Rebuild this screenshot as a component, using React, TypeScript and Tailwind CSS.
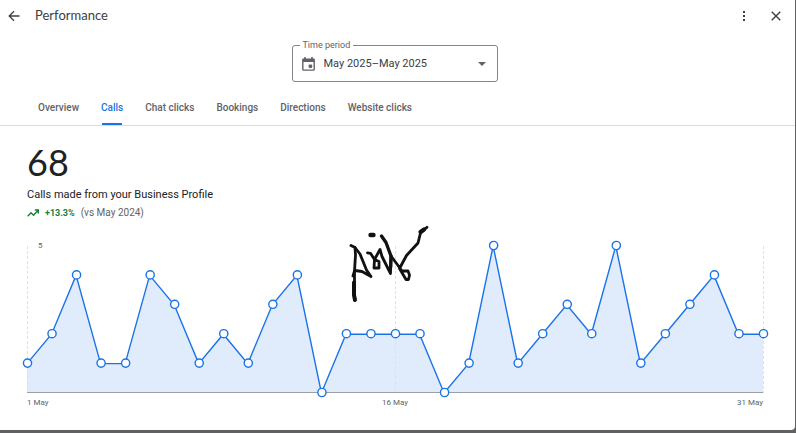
import React, { useState } from 'react';

const tabs = ['Overview', 'Calls', 'Chat clicks', 'Bookings', 'Directions', 'Website clicks'];

// Calls per day, 1 May to 31 May
const calls = [1, 2, 4, 1, 1, 4, 3, 1, 2, 1, 3, 4, 0, 2, 2, 2, 2, 0, 1, 5, 1, 2, 3, 2, 5, 1, 2, 3, 4, 2, 2];

const WIDTH = 736;
const HEIGHT = 147;
const MAX = 5;

const points = calls.map((value, day) => ({
  x: (day * WIDTH) / (calls.length - 1),
  y: HEIGHT - (value * HEIGHT) / MAX,
}));

const Header: React.FC = () => (
  <header className="flex h-8 items-center pl-2 pr-[13px] text-[#3c4043]">
    <button type="button" aria-label="Back" className="shrink-0">
      <svg className="h-3 w-3" viewBox="0 0 12 12" fill="none" stroke="currentColor" strokeWidth="1.3">
        <path d="M11.5 6H1.5M6 1.2L1.2 6L6 10.8" />
      </svg>
    </button>
    <h1 className="ml-[15px] flex-1 pb-0.5 font-['Lato',sans-serif] text-[13px] leading-4">Performance</h1>
    <button type="button" aria-label="More options" className="mr-5">
      <svg className="h-3 w-3" viewBox="0 0 12 12" fill="currentColor">
        <rect x="5" y="1" width="2" height="2" />
        <rect x="5" y="5" width="2" height="2" />
        <rect x="5" y="9" width="2" height="2" />
      </svg>
    </button>
    <button type="button" aria-label="Close">
      <svg className="h-3 w-3" viewBox="0 0 12 12" fill="none" stroke="currentColor" strokeWidth="1.4">
        <path d="M1.7 1.7L10.3 10.3M10.3 1.7L1.7 10.3" />
      </svg>
    </button>
  </header>
);

const PeriodSelect: React.FC = () => (
  <div className="flex justify-center pr-[6px] pt-[13px]">
    <div className="relative flex h-[37px] w-[206px] items-center rounded-[3px] border border-[#80868b]">
      <label htmlFor="period" className="absolute -top-[7px] left-[7px] bg-white px-[3px] text-[9px] leading-3 text-[#5f6368]">
        Time period
      </label>
      <svg className="pointer-events-none absolute left-[9px] h-[14px] w-[13px]" viewBox="0 0 13 14" fill="#5f6368">
        <path
          fillRule="evenodd"
          d="M2.2 0h1.6v1.4h5.4V0h1.6v1.4h.9c.7 0 1.2.5 1.2 1.2v10c0 .7-.5 1.2-1.2 1.2H1.3c-.7 0-1.2-.5-1.2-1.2v-10c0-.7.5-1.2 1.2-1.2h.9zM1.5 5v7.4h10V5z"
        />
        <rect x="6.6" y="7.4" width="3.6" height="3.6" rx="1" />
      </svg>
      <select id="period" className="h-full w-full appearance-none bg-transparent pl-[31px] pr-7 pt-px text-[11px] text-[#3c4043]">
        <option>May 2025–May 2025</option>
      </select>
      <svg className="pointer-events-none absolute right-[11px] h-1 w-2" viewBox="0 0 8 4" fill="#5f6368">
        <path d="M0 0h8L4 4z" />
      </svg>
    </div>
  </div>
);

const CallsChart: React.FC = () => {
  const line = points.map((p) => `${p.x},${p.y}`).join(' ');

  return (
    <div className="mt-[27px]">
      <div className="relative">
        <svg className="block h-auto w-full overflow-visible" viewBox={`0 0 ${WIDTH} ${HEIGHT}`} role="img" aria-label="Calls per day">
          <polygon points={`0,${HEIGHT} ${line} ${WIDTH},${HEIGHT}`} fill="#e0ebfc" />
          <g stroke="#e0e1e4" strokeDasharray="3 2">
            <path d={`M.5 0V${HEIGHT}`} />
            <path d={`M${WIDTH / 2 + 0.5} 0V${HEIGHT}`} />
            <path d={`M${WIDTH + 0.5} 0V${HEIGHT}`} />
          </g>
          <path d={`M0 ${HEIGHT - 0.5}H${WIDTH}`} stroke="#9aa0a6" />
          <polyline points={line} fill="none" stroke="#1a73e8" strokeWidth="1.4" />
          <g fill="#fff" stroke="#1a73e8" strokeWidth="1.4">
            {points.map((p) => (
              <circle key={p.x} cx={p.x + 0.5} cy={p.y - 0.5} r="4.1" />
            ))}
          </g>
          {/* Handwritten mark */}
          <g transform="translate(303 -31)" fill="none" stroke="#111" strokeWidth="2.8" strokeLinecap="round" strokeLinejoin="round">
            <path d="M21 30.5L25 32.5L25.5 40L24.5 56L23 61" />
            <path d="M25 32.5L30 39L36.5 55L41 61.5L32 56.5L25 55.5" />
            <path d="M24.5 57V84.5" />
            <path d="M24 67.5V80L25 85" strokeWidth="4" />
            <path d="M37.5 37.8L40.5 38.3L44.5 44.5L44 53H49V46.5L44.5 44.5L50 34.5L52 41.5L60.5 58.5L61 41" />
            <path d="M61 41L69.5 52.5L72 56H78L79.5 60L78.5 64.5H76L69.5 53.5L76.5 40.5L88 28L90.5 18L97 12.3" />
            <path d="M51.5 21L56 27.5L61 41L60.7 52" strokeWidth="3.3" />
            <path d="M40.5 20H43.5" strokeWidth="4.4" />
            <path d="M90.5 17L94 14.5" strokeWidth="4.2" />
          </g>
        </svg>
        <span className="absolute -top-[6px] left-[11px] text-[8px] leading-3 text-[#5f6368]">5</span>
      </div>
      <div className="mt-1 grid grid-cols-3 text-[8px] leading-3 text-[#5f6368]">
        <span>1 May</span>
        <span className="text-center">16 May</span>
        <span className="text-right">31 May</span>
      </div>
    </div>
  );
};

const App: React.FC = () => {
  const [active, setActive] = useState('Calls');

  return (
    <div className="flex min-h-screen flex-col bg-[#5f6163] pb-[3px] pr-px font-['Roboto',sans-serif]">
      <main className="flex-1 rounded-br bg-white">
        <Header />
        <PeriodSelect />

        <nav className="mt-2 flex h-9 gap-[22px] border-b border-[#dadce0] pl-[38px] text-[10px] font-medium">
          {tabs.map((tab) => (
            <button
              key={tab}
              type="button"
              onClick={() => setActive(tab)}
              className={`relative ${tab === active ? 'text-[#1a73e8]' : 'text-[#5f6368]'}`}
            >
              {tab}
              {tab === active && <span className="absolute inset-x-px bottom-0 h-0.5 bg-[#1a73e8]" />}
            </button>
          ))}
        </nav>

        <section className="pl-[27px] pr-8 pt-4">
          <p className="font-['Lato',sans-serif] text-4xl text-[#202124]">68</p>
          <h2 className="mt-[5px] text-[11px] leading-4 text-[#202124]">Calls made from your Business Profile</h2>
          <p className="mt-1 flex items-center text-[10px] leading-3 text-[#5f6368]">
            <svg className="mr-[6px] h-2 w-3" viewBox="0 0 12 8" fill="none" stroke="#188038" strokeWidth="1.4">
              <path d="M.7 7.2L4 3.8L6.5 6.2L11 1.5M7.8 1H11.3V4.5" />
            </svg>
            <span className="mr-[6px] text-[9px] font-bold text-[#188038]">+13.3%</span>
            (vs May 2024)
          </p>
          <CallsChart />
        </section>
      </main>
    </div>
  );
};

export default App;
